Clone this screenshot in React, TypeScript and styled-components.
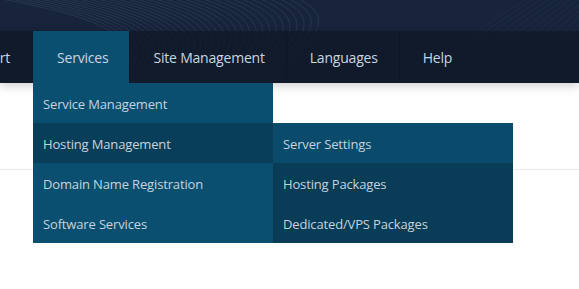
import React from 'react';
import styled, { createGlobalStyle } from 'styled-components';

const GlobalStyle = createGlobalStyle`
  html, body {
    margin: 0;
    padding: 0;
    background: #ffffff;
    font-family: 'Open Sans', 'Noto Sans', sans-serif;
    overflow: hidden;
  }
`;

const NAV_ITEMS = ['Services', 'Site Management', 'Languages', 'Help'];
const SERVICES_MENU = [
  'Service Management',
  'Hosting Management',
  'Domain Name Registration',
  'Software Services',
];
const HOSTING_MENU = ['Server Settings', 'Hosting Packages', 'Dedicated/VPS Packages'];

const Waves: React.FC = () => {
  const lines = Array.from({ length: 32 }, (_, i) => i);
  return (
    <WaveSvg viewBox="0 0 579 83" preserveAspectRatio="none">
      {lines.map(i => (
        <path
          key={i}
          d={`M ${-20 + i * 10} -5 C ${90 + i * 8} 15, ${170 + i * 5} 35, ${100 + i * 5} 90`}
          stroke="rgba(170,190,220,0.16)"
          strokeWidth="0.7"
          fill="none"
        />
      ))}
      {lines.slice(0, 12).map(i => (
        <path
          key={`r${i}`}
          d={`M ${470 + i * 9} 35 C ${495 + i * 8} 20, ${515 + i * 8} 5, ${535 + i * 7} -5`}
          stroke="rgba(170,190,220,0.07)"
          strokeWidth="0.7"
          fill="none"
        />
      ))}
    </WaveSvg>
  );
};

const App: React.FC = () => {
  return (
    <Page>
      <GlobalStyle />
      <Header>
        <Waves />
        <TopBand />
        <NavBar>
          <CutItem>
            <span>Support</span>
          </CutItem>
          {NAV_ITEMS.map(item => (
            <NavItem key={item} active={item === 'Services'}>
              {item}
              {item === 'Services' && (
                <Dropdown>
                  {SERVICES_MENU.map(entry => (
                    <MenuRow key={entry} hovered={entry === 'Hosting Management'}>
                      {entry}
                      {entry === 'Hosting Management' && (
                        <SubMenu>
                          {HOSTING_MENU.map(sub => (
                            <SubRow key={sub} light={sub === 'Server Settings'}>
                              {sub}
                            </SubRow>
                          ))}
                        </SubMenu>
                      )}
                    </MenuRow>
                  ))}
                </Dropdown>
              )}
            </NavItem>
          ))}
        </NavBar>
      </Header>
      <Content>
        <Divider />
      </Content>
    </Page>
  );
};

const Page = styled.div`
  width: 579px;
  height: 289px;
  background: #ffffff;
`;

const Header = styled.div`
  position: relative;
  background: #17243c;
  z-index: 2;
`;

const WaveSvg = styled.svg`
  position: absolute;
  left: 0;
  top: 0;
  width: 100%;
  height: 100%;
  pointer-events: none;
`;

const TopBand = styled.div`
  height: 31px;
`;

const NavBar = styled.nav`
  position: relative;
  display: flex;
  height: 52px;
  background: rgba(14, 22, 36, 0.72);
  box-shadow: 0 2px 10px rgba(0, 0, 0, 0.22);
`;

const CutItem = styled.div`
  width: 33px;
  box-sizing: border-box;
  padding-right: 23px;
  display: flex;
  justify-content: flex-end;
  align-items: center;
  overflow: hidden;
  white-space: nowrap;
  color: #c8d5e2;
  font-size: 14px;
  letter-spacing: -0.2px;
`;

const NavItem = styled.div<{ active?: boolean }>`
  position: relative;
  display: flex;
  align-items: center;
  padding: 1px 21px 0 23px;
  border-left: 1px solid ${p => (p.active ? '#0a4f70' : '#0d1522')};
  background: ${p => (p.active ? '#0a4f70' : 'transparent')};
  color: #c8d5e2;
  font-size: 14px;
  letter-spacing: -0.2px;
  white-space: nowrap;
`;

const Dropdown = styled.div`
  position: absolute;
  left: -1px;
  top: 52px;
  width: 240px;
  background: #0a4f70;
  z-index: 5;
  letter-spacing: -0.15px;
`;

const MenuRow = styled.div<{ hovered?: boolean }>`
  position: relative;
  height: 40px;
  box-sizing: border-box;
  display: flex;
  align-items: center;
  padding: 2px 10px 0;
  background: ${p => (p.hovered ? '#083e59' : '#0a4f70')};
  color: #c5d3df;
  font-size: 13px;
`;

const SubMenu = styled.div`
  position: absolute;
  left: 240px;
  top: 0;
  width: 240px;
`;

const SubRow = styled.div<{ light?: boolean }>`
  height: 40px;
  box-sizing: border-box;
  display: flex;
  align-items: center;
  padding: 2px 10px 0;
  background: ${p => (p.light ? '#0a4a6a' : '#083c57')};
  color: #c5d3df;
  font-size: 13px;
`;

const Content = styled.div`
  position: relative;
  z-index: 1;
  padding-top: 86px;
`;

const Divider = styled.div`
  height: 1px;
  background: #e8e8e8;
`;

export default App;
